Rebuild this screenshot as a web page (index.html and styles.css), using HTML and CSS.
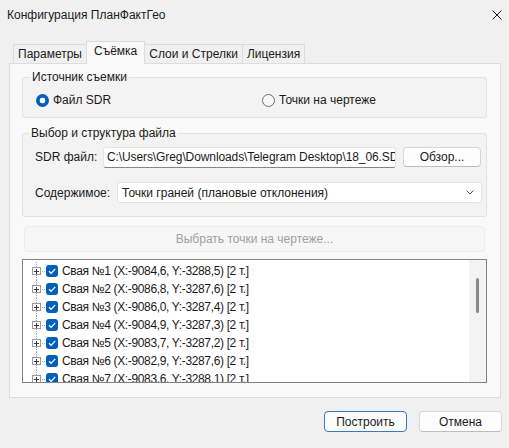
FILE: index.html
```html
<!DOCTYPE html>
<html>
<head>
  <meta charset="utf-8">
  <link rel="stylesheet" href="styles.css">
</head>
<body>

  <!-- Заголовок окна -->
  <div class="titlebar">
    <span class="title">Конфигурация ПланФактГео</span>
    <svg class="close" viewBox="0 0 10 10"><path d="M0.5 0.5 9.5 9.5 M9.5 0.5 0.5 9.5" stroke="#1a1a1a" stroke-width="1"/></svg>
  </div>

  <div class="dialog">
    <div class="tabs">
      <div class="tab">Параметры</div>
      <div class="tab active">Съёмка</div>
      <div class="tab">Слои и Стрелки</div>
      <div class="tab">Лицензия</div>
    </div>

    <div class="page">
      <fieldset class="group group-source">
        <legend>Источник съемки</legend>
        <div class="radios">
          <label class="radio first"><span class="dot checked"></span>Файл SDR</label>
          <label class="radio"><span class="dot"></span>Точки на чертеже</label>
        </div>
      </fieldset>

      <fieldset class="group group-file">
        <legend>Выбор и структура файла</legend>
        <div class="field">
          <span class="lbl lbl-file">SDR файл:</span>
          <div class="textbox">C:\Users\Greg\Downloads\Telegram Desktop\18_06.SDR</div>
          <button class="btn browse">Обзор...</button>
        </div>
        <div class="field field-content">
          <span class="lbl lbl-content">Содержимое:</span>
          <div class="combo">
            <span>Точки граней (плановые отклонения)</span>
            <svg class="chevron" viewBox="0 0 8 5"><path d="M0.5 0.5 4 4 7.5 0.5" fill="none" stroke="#5c5c5c" stroke-width="1"/></svg>
          </div>
        </div>
      </fieldset>

      <button class="btn pick" disabled>Выбрать точки на чертеже...</button>

      <div class="tree">
        <ul class="nodes" id="nodes"></ul>
        <div class="vscroll"><div class="thumb"></div></div>
      </div>
    </div>

    <div class="footer">
      <button class="btn default">Построить</button>
      <button class="btn">Отмена</button>
    </div>
  </div>

  <script>
    // сваи из файла SDR
    const piles = [
      ['-9084,6', '-3288,5'],
      ['-9086,8', '-3287,6'],
      ['-9086,0', '-3287,4'],
      ['-9084,9', '-3287,3'],
      ['-9083,7', '-3287,2'],
      ['-9082,9', '-3287,6'],
      ['-9083,6', '-3288,1']
    ];

    const expander =
      '<svg class="exp" viewBox="0 0 15 18">' +
      '<path d="M5.5 0V5 M5.5 13V18 M9 9.5H15" stroke="#a0a0a0" stroke-dasharray="1 1"/>' +
      '<rect x="1.5" y="5.5" width="8" height="7" fill="#fff" stroke="#9a9a9a"/>' +
      '<path d="M3 9.5H8 M5.5 7V12" stroke="#3a3a3a"/>' +
      '</svg>';

    const check =
      '<svg class="chk" viewBox="0 0 12 12">' +
      '<rect width="12" height="12" rx="3" fill="#005fb8"/>' +
      '<path d="M3 6.3 5.1 8.4 9.2 3.9" fill="none" stroke="#fff" stroke-width="1.3"/>' +
      '</svg>';

    const list = document.getElementById('nodes');
    piles.forEach((p, i) => {
      const li = document.createElement('li');
      li.className = 'node';
      li.innerHTML = expander + check +
        '<span class="txt">Свая №' + (i + 1) + ' (X:' + p[0] + ', Y:' + p[1] + ') [2 т.]</span>';
      list.appendChild(li);
    });
  </script>

</body>
</html>
```

FILE: styles.css
```css
* {
  box-sizing: border-box;
}

body {
  margin: 0;
  width: 509px;
  height: 448px;
  overflow: hidden;
  background-color: #f0f0f0;
  font-family: "Liberation Sans", Arial, sans-serif;
  font-size: 12px;
  color: #1a1a1a;
}

.titlebar {
  height: 30px;
  display: flex;
  align-items: center;
  justify-content: space-between;
  padding: 0 7px;
}

.close {
  width: 10px;
  height: 10px;
}

.dialog {
  padding: 0 8px 0 9px;
}

/* вкладки */
.tabs {
  display: flex;
  align-items: flex-end;
  height: 22px;
  margin-top: 11px;
  padding-left: 4px;
}

.tab {
  height: 19px;
  line-height: 18px;
  padding: 0 4px;
  border: 1px solid #dcdcdc;
  border-bottom: none;
  background-color: #f0f0f0;
  margin-left: -1px;
}

.tab:first-child {
  margin-left: 0;
}

.tab.active {
  position: relative;
  height: 23px;
  margin-bottom: -1px;
  padding: 0 7px;
  background-color: #f9f9f9;
  line-height: 18px;
}

.page {
  height: 335px;
  border: 1px solid #dcdcdc;
  background-color: #f9f9f9;
  padding: 5px 13px 14px 12px;
}

/* группы */
.group {
  margin: 0;
  min-width: 0;
  border: 1px solid #e2e2e2;
  border-radius: 3px;
  background-color: #f3f3f3;
}

.group legend {
  margin-left: -6px;
  padding: 0 2px;
  line-height: 16px;
}

.group-source {
  padding: 4px 12px 6px 13px;
}

.radios {
  display: flex;
  align-items: center;
  height: 22px;
}

.radio {
  display: flex;
  align-items: center;
  gap: 4px;
}

.radio.first {
  width: 226px;
}

.dot {
  width: 13px;
  height: 13px;
  border-radius: 50%;
  border: 1px solid #6f6f6f;
  background-color: #f6f6f6;
}

.dot.checked {
  border: none;
  background: radial-gradient(circle, #fff 0 2.6px, #005fb8 3.2px);
}

.group-file {
  margin-top: 7px;
  padding: 5px 4px 13px 12px;
}

.field {
  display: flex;
  align-items: center;
  height: 22px;
}

.field-content {
  height: 21px;
  margin-top: 14px;
}

.lbl-file {
  width: 68px;
}

.lbl-content {
  width: 82px;
}

.textbox {
  width: 293px;
  height: 21px;
  line-height: 19px;
  padding: 0 3px;
  white-space: nowrap;
  overflow: hidden;
  letter-spacing: -0.1px;
  background-color: #fff;
  border: 1px solid #e5e5e5;
  border-bottom-color: #868686;
  border-radius: 3px;
}

.combo {
  width: 365px;
  height: 21px;
  display: flex;
  align-items: center;
  justify-content: space-between;
  padding: 0 7px 0 4px;
  background-color: #fff;
  border: 1px solid #e2e2e2;
  border-radius: 3px;
}

.chevron {
  width: 8px;
  height: 5px;
}

/* кнопки */
.btn {
  font: inherit;
  color: #1a1a1a;
  padding: 0;
  background-color: #fdfdfd;
  border: 1px solid #d6d6d6;
  border-bottom-color: #bdbdbd;
  border-radius: 4px;
}

.browse {
  width: 78px;
  height: 20px;
  margin-left: 7px;
}

.pick {
  display: block;
  width: 461px;
  height: 26px;
  margin: 9px 2px 0;
  color: #a0a0a0;
  background-color: #f6f6f6;
  border-color: #ececec;
}

/* дерево свай */
.tree {
  display: flex;
  height: 124px;
  margin-top: 7px;
  border: 1px solid #838383;
  background-color: #fff;
}

.nodes {
  flex: 1;
  list-style: none;
  margin: 0;
  padding: 2px 0 0 8px;
  overflow: hidden;
}

.node {
  display: flex;
  align-items: center;
  height: 18px;
  white-space: nowrap;
}

.node .txt {
  letter-spacing: -0.35px;
}

.exp {
  width: 15px;
  height: 18px;
  flex: none;
}

.chk {
  width: 12px;
  height: 12px;
  flex: none;
  margin-right: 4px;
}

.vscroll {
  width: 17px;
  padding-top: 18px;
  background-color: #f3f3f3;
}

.thumb {
  width: 3px;
  height: 35px;
  margin: 0 auto;
  border-radius: 2px;
  background-color: #8a8a8a;
}

.footer {
  display: flex;
  justify-content: flex-end;
  gap: 12px;
  margin-top: 13px;
  margin-right: -1px;
}

.footer .btn {
  width: 83px;
  height: 21px;
}

.footer .default {
  border-color: #3a78b8;
}
```
